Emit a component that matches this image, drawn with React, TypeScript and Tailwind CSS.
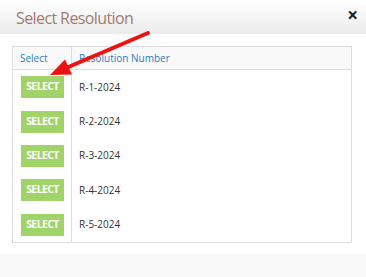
import React from "react";

const rows = ["R-1-2024", "R-2-2024", "R-3-2024", "R-4-2024", "R-5-2024"];

export default function App() {
    return (
        <div className="relative w-[366px] h-[277px] bg-white flex flex-col overflow-hidden" style={{ fontFamily: '"Open Sans", sans-serif' }}>
            {/* Modal header */}
            <div className="h-[34px] flex items-center justify-between pl-4 pr-[8px] bg-gradient-to-b from-white to-[#ebebeb]">
                <h1 className="text-[16px] text-[#a27b70] tracking-[-0.6px] leading-none pt-[2px]">Select Resolution</h1>
                <span className="text-[19px] font-bold text-[#222] leading-none pb-[3px]">×</span>
            </div>

            {/* Modal body */}
            <div className="flex-1 pt-3 pl-3 pr-[14px]">
                <div className="border border-[#dddddd]">
                    <div className="flex h-[23px] bg-[#f9f9f9] border-b border-[#dddddd] text-[10px] text-[#2a7dc2]">
                        <div className="w-[59px] border-r border-[#dddddd] flex items-center pl-[7px]">Select</div>
                        <div className="flex items-center pl-[7px]">Resolution Number</div>
                    </div>
                    {rows.map((r) => (
                        <div key={r} className="flex h-[34.4px] text-[10px] text-[#333]">
                            <div className="w-[59px] border-r border-[#dddddd] flex items-center pl-[8px]">
                                <button className="w-[43px] h-[22px] bg-[#a0d468] text-white font-bold text-[10.5px] tracking-[-0.6px]">SELECT</button>
                            </div>
                            <div className="flex items-center pl-[7px]">{r}</div>
                        </div>
                    ))}
                </div>
            </div>

            {/* Modal footer */}
            <div className="h-[23px] bg-[#f9f9f9]" />

            {/* annotation arrow */}
            <svg className="absolute left-0 top-0 pointer-events-none" width="366" height="277">
                <line x1="148" y1="33" x2="66" y2="68" stroke="#ee1111" strokeWidth="4" strokeLinecap="round" />
                <polygon points="50,75 65,59.5 72,74.5" fill="#ee1111" />
            </svg>
        </div>
    );
}
